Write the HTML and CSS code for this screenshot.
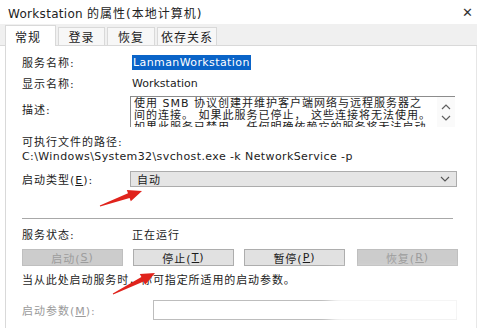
FILE: index.html
```html
<!DOCTYPE html>
<html lang="zh">
<head>
<meta charset="utf-8">
<link rel="stylesheet" href="styles.css">
</head>
<body>
<div class="window">
  <div class="titlebar">
    <span class="title">Workstation <span class="cjk">的属性(本地计算机)</span></span>
    <span class="close">✕</span>
  </div>
  <div class="tabstrip">
    <div class="tab active">常规</div>
    <div class="tab">登录</div>
    <div class="tab">恢复</div>
    <div class="tab">依存关系</div>
  </div>
  <div class="panel">
    <div class="row r1">
      <span class="label cjk">服务名称:</span>
      <span class="value"><span class="sel">LanmanWorkstation</span></span>
    </div>
    <div class="row r2">
      <span class="label cjk">显示名称:</span>
      <span class="value">Workstation</span>
    </div>
    <div class="row r3">
      <span class="label cjk">描述:</span>
      <div class="textarea">
        <div class="ta-text">
          <span class="ta-line">使用 SMB 协议创建并维护客户端网络与远程服务器之</span>
          <span class="ta-line">间的连接。 如果此服务已停止， 这些连接将无法使用。</span>
          <span class="ta-line">如果此服务已禁用， 任何明确依赖它的服务将无法启动。</span>
        </div>
        <div class="ta-scroll">
          <svg width="10" height="6" viewBox="0 0 10 6"><path d="M1 5 L5 1 L9 5" fill="none" stroke="#606060" stroke-width="1.2"/></svg>
          <svg width="10" height="6" viewBox="0 0 10 6"><path d="M1 1 L5 5 L9 1" fill="none" stroke="#606060" stroke-width="1.2"/></svg>
        </div>
      </div>
    </div>
    <div class="pathlabel cjk">可执行文件的路径:</div>
    <div class="path">C:\Windows\System32\svchost.exe -k NetworkService -p</div>
    <div class="row r4">
      <span class="label cjk">启动类型(<u>E</u>):</span>
      <div class="select">
        <span class="cjk">自动</span>
        <svg width="10" height="6" viewBox="0 0 10 6"><path d="M1 1 L5 5 L9 1" fill="none" stroke="#555" stroke-width="1.1"/></svg>
      </div>
    </div>
    <div class="sep"></div>
    <div class="row r5">
      <span class="label cjk">服务状态:</span>
      <span class="value cjk">正在运行</span>
    </div>
    <div class="buttons">
      <div class="btn disabled cjk">启动(<u>S</u>)</div>
      <div class="btn cjk">停止(<u>T</u>)</div>
      <div class="btn cjk">暂停(<u>P</u>)</div>
      <div class="btn disabled cjk">恢复(<u>R</u>)</div>
    </div>
    <div class="hint cjk">当从此处启动服务时，你可指定所适用的启动参数。</div>
    <div class="row r6">
      <span class="label dim cjk">启动参数(<u>M</u>):</span>
      <div class="input"></div>
    </div>
  </div>
  <div class="smudge"></div>
  <svg class="arrows" width="477" height="328" viewBox="0 0 477 328">
    <polygon fill="#e0231c" points="99.8,205.5 128.0,193.3 126.8,190.1 142,191 130.8,201.3 129.6,198.1 100.2,206.5"/>
    <polygon fill="#e0231c" points="112.8,293.6 141.4,277.1 139.8,273.9 155,273 145.2,284.7 143.6,281.5 113.2,294.4"/>
  </svg>
</div>
</body>
</html>
```
FILE: styles.css
```css
html, body {
  margin: 0;
  padding: 0;
  background: #ffffff;
}
.window {
  position: relative;
  width: 477px;
  height: 328px;
  overflow: hidden;
  background: #ffffff;
  font-family: "DejaVu Sans", "Noto Sans CJK SC", sans-serif;
  font-size: 11px;
  color: #1c1c1c;
}
.cjk {
  letter-spacing: 1px;
}
.titlebar {
  height: 24px;
  display: flex;
  align-items: center;
  justify-content: space-between;
  padding: 0 4px 0 8px;
  box-sizing: border-box;
  font-size: 12px;
  color: #222;
}
.title {
  letter-spacing: 0.3px;
}
.close {
  font-size: 13px;
  color: #333;
  font-family: "DejaVu Sans", sans-serif;
}
.tabstrip {
  height: 22px;
  background: #f0f0f0;
  border-bottom: 1px solid #d9d9d9;
  display: flex;
  align-items: flex-end;
  padding-left: 5px;
  box-sizing: border-box;
  gap: 2px;
}
.tab {
  height: 18px;
  padding: 0;
  display: flex;
  align-items: center;
  justify-content: center;
  background: #f7f7f7;
  border: 1px solid #d9d9d9;
  border-bottom: none;
  box-sizing: border-box;
  letter-spacing: 1px;
  font-size: 12px;
  white-space: nowrap;
}
.tab.active {
  width: 51px;
  height: 21px;
  background: #ffffff;
  margin-bottom: -1px;
  justify-content: flex-start;
  padding-left: 9px;
}
.tab:nth-child(2) { width: 47px; }
.tab:nth-child(3) { width: 48px; }
.tab:nth-child(4) { width: 60px; }
.panel {
  margin-left: 5px;
  border-left: 1px solid #d9d9d9;
  border-right: 1px solid #e6e6e6;
  height: 300px;
  padding: 9px 0 0 16px;
  box-sizing: border-box;
}
.row {
  display: flex;
  align-items: center;
}
.label {
  width: 110px;
  flex: none;
}
.r1 { height: 14px; }
.sel {
  background: #0a64c8;
  color: #ffffff;
  padding: 1px 1px;
  letter-spacing: 0.4px;
}
.r2 { height: 14px; margin-top: 7px; }
.r3 {
  margin-top: 6px;
  align-items: flex-start;
}
.r3 .label { padding-top: 5px; }
.textarea {
  margin-left: -2px;
  width: 325px;
  height: 31px;
  border-top: 1px solid #8c8c8c;
  border-left: 1px solid #8c8c8c;
  display: flex;
  overflow: hidden;
  box-sizing: border-box;
  background: #fff;
}
.ta-text {
  flex: 1;
  padding: 1px 0 0 3px;
  line-height: 12px;
  font-size: 11px;
  letter-spacing: 1px;
  height: 31px;
  overflow: hidden;
  white-space: nowrap;
}
.ta-line {
  display: block;
}
.ta-scroll {
  width: 18px;
  flex: none;
  display: flex;
  flex-direction: column;
  align-items: center;
  justify-content: space-around;
  padding: 4px 0;
  box-sizing: border-box;
  background: #fafafa;
}
.pathlabel {
  margin-top: 9px;
  height: 13px;
  line-height: 13px;
}
.path {
  margin-top: 1px;
  height: 13px;
  line-height: 13px;
  letter-spacing: 0.4px;
}
.r4 { margin-top: 8px; height: 16px; }
.select {
  margin-left: -2px;
  width: 327px;
  height: 16px;
  background: #e5e5e5;
  border: 1px solid #acacac;
  box-sizing: border-box;
  display: flex;
  align-items: center;
  justify-content: space-between;
  padding: 0 6px 0 6px;
}
.sep {
  margin-top: 31px;
  width: 431px;
  height: 1px;
  background: #a8a8a8;
}
.r5 { margin-top: 8px; height: 14px; }
.buttons {
  margin-top: 8px;
  display: flex;
  gap: 10px;
}
.btn {
  width: 101px;
  height: 17px;
  background: #e1e1e1;
  border: 1px solid #adadad;
  box-sizing: border-box;
  display: flex;
  align-items: center;
  justify-content: center;
  font-size: 11px;
}
.btn:nth-child(4) { margin-left: 2px; }
.btn.disabled {
  background: #cccccc;
  border-color: #bfbfbf;
  color: #9c9c9c;
}
.hint {
  margin-top: 8px;
  height: 14px;
  line-height: 14px;
  letter-spacing: 0.9px;
}
.r6 {
  margin-top: 12px;
  height: 20px;
}
.label.dim {
  color: #9a9a9a;
  width: 131px;
}
.input {
  width: 304px;
  height: 20px;
  border: 1px solid #bdbdbd;
  box-sizing: border-box;
  background: #fff;
}
.smudge {
  position: absolute;
  left: 330px;
  top: 272px;
  width: 140px;
  height: 56px;
  background: rgba(255,255,255,0.85);
  filter: blur(6px);
}
.arrows {
  position: absolute;
  left: 0;
  top: 0;
  pointer-events: none;
}
```
